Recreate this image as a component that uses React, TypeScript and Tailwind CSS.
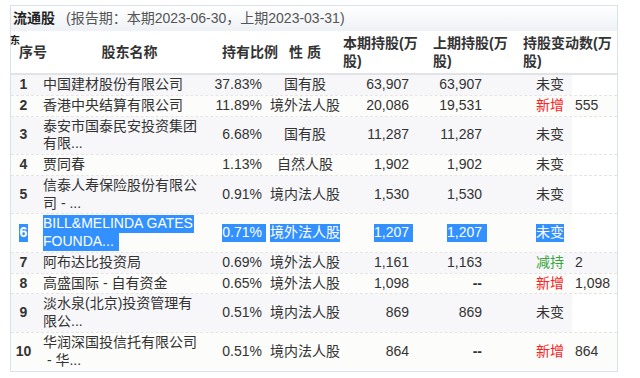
import React from "react";

type Row = {
  n: number;
  name: string[];
  pct: string;
  type: string;
  cur: string;
  prev: string;
  status: string;
  chg?: string;
  sel?: boolean;
};

const rows: Row[] = [
  { n: 1, name: ["中国建材股份有限公司"], pct: "37.83%", type: "国有股", cur: "63,907", prev: "63,907", status: "未变" },
  { n: 2, name: ["香港中央结算有限公司"], pct: "11.89%", type: "境外法人股", cur: "20,086", prev: "19,531", status: "新增", chg: "555" },
  { n: 3, name: ["泰安市国泰民安投资集团", "有限..."], pct: "6.68%", type: "国有股", cur: "11,287", prev: "11,287", status: "未变" },
  { n: 4, name: ["贾同春"], pct: "1.13%", type: "自然人股", cur: "1,902", prev: "1,902", status: "未变" },
  { n: 5, name: ["信泰人寿保险股份有限公", "司 - ..."], pct: "0.91%", type: "境内法人股", cur: "1,530", prev: "1,530", status: "未变" },
  { n: 6, name: ["BILL&MELINDA GATES", "FOUNDA..."], pct: "0.71%", type: "境外法人股", cur: "1,207", prev: "1,207", status: "未变", sel: true },
  { n: 7, name: ["阿布达比投资局"], pct: "0.69%", type: "境外法人股", cur: "1,161", prev: "1,163", status: "减持", chg: "2" },
  { n: 8, name: ["高盛国际 - 自有资金"], pct: "0.65%", type: "境外法人股", cur: "1,098", prev: "--", status: "新增", chg: "1,098" },
  { n: 9, name: ["淡水泉(北京)投资管理有", "限公..."], pct: "0.51%", type: "境内法人股", cur: "869", prev: "869", status: "未变" },
  { n: 10, name: ["华润深国投信托有限公司", "\u00a0- 华..."], pct: "0.51%", type: "境内法人股", cur: "864", prev: "--", status: "新增", chg: "864" },
];

function Hl({ on, children, extra = "" }: { on?: boolean; children: React.ReactNode; extra?: string }) {
  if (!on) return <span className={extra}>{children}</span>;
  return <span className={"inline-block bg-[#3390ff] text-white " + extra}>{children}</span>;
}

export default function App() {
  const font = { fontFamily: '"Liberation Sans", Arial, "Noto Sans CJK SC", sans-serif' };
  return (
    <div className="w-[640px] h-[378px] bg-white pt-[5px] pl-[10px] text-[14px] text-[#333]" style={font}>
      <div className="w-[608px] border border-[#d9e1ea] bg-white pb-[1px]">
        {/* Title bar */}
        <div className="h-[25px] flex items-center pl-[2px] bg-linear-to-b from-white to-[#eef1f5]">
          <span className="font-bold text-[#222]">流通股</span>
          <span className="ml-[11px] text-[#555]">(报告期：本期2023-06-30，上期2023-03-31)</span>
        </div>
        {/* Header */}
        <div className="relative h-[44px] flex border-b-2 border-[#e1e3e7] font-bold text-[#333] leading-[18px] bg-white">
          <span className="absolute -left-px top-[5px] text-[10px] leading-none font-bold text-[#222]">东</span>
          <div className="w-[25px] flex items-center pl-[8px] whitespace-nowrap">序号</div>
          <div className="w-[180px] flex items-center justify-center pl-[7px]">股东名称</div>
          <div className="w-[51px] flex items-center pl-[6px] whitespace-nowrap">持有比例</div>
          <div className="w-[76px] flex items-center justify-center whitespace-pre">性 质</div>
          <div className="w-[90px] flex items-center pl-0">
            本期持股(万
            <br />
            股)
          </div>
          <div className="w-[90px] flex items-center">
            上期持股(万
            <br />
            股)
          </div>
          <div className="w-[94px] flex items-center">
            持股变动数(万
            <br />
            股)
          </div>
        </div>
        {/* Rows */}
        <div className="leading-[17.75px]">
          {rows.map((r, i) => {
            const odd = r.n % 2 === 1;
            const rowBg = odd ? "bg-[#f7f7fa]" : "bg-[#fcfcfa]";
            const last = i === rows.length - 1;
            return (
              <div
                key={r.n}
                className={"flex " + (last ? "" : "border-b border-dashed border-[#e4e4e4]")}
              >
                <div className={"flex " + rowBg}>
                  <div className="w-[25px] py-px flex items-center justify-center font-bold">
                    <Hl on={r.sel} extra={r.sel ? "px-[1px]" : ""}>{r.n}</Hl>
                  </div>
                  <div className="w-[180px] py-px pl-[7px] flex flex-col justify-center whitespace-pre">
                    {r.name.map((l, k) => (
                      <div key={k}>
                        <Hl on={r.sel} extra={r.sel ? (k === r.name.length - 1 ? "pr-[5px]" : "pr-[1px]") : ""}>{l}</Hl>
                      </div>
                    ))}
                  </div>
                  <div className="w-[51px] py-px pr-[5px] flex items-center justify-end">
                    <Hl on={r.sel} extra={r.sel ? "pr-[4px] -mr-[4px]" : ""}>{r.pct}</Hl>
                  </div>
                  <div className="w-[76px] py-px flex items-center justify-center whitespace-nowrap">
                    <Hl on={r.sel}>{r.type}</Hl>
                  </div>
                  <div className="w-[90px] py-px pr-[24px] flex items-center justify-end">
                    <Hl on={r.sel} extra={r.sel ? "pr-[4px] -mr-[4px]" : ""}>{r.cur}</Hl>
                  </div>
                  <div className={"w-[90px] py-px pr-[41px] flex items-center justify-end " + (r.prev === "--" ? "font-bold" : "")}>
                    <Hl on={r.sel} extra={r.sel ? "pr-[5px] -mr-[5px]" : ""}>{r.prev}</Hl>
                  </div>
                  <div className="w-[49px] py-px pl-[13px] flex items-center">
                    <Hl
                      on={r.sel}
                      extra={
                        r.status === "新增"
                          ? "text-[#ff2222]"
                          : r.status === "减持"
                          ? "text-[#3aa63a]"
                          : ""
                      }
                    >
                      {r.status}
                    </Hl>
                  </div>
                </div>
                <div className={"w-[45px] py-px pl-[3px] flex items-center " + (r.chg ? rowBg : "bg-white")}>
                  {r.chg ?? ""}
                </div>
              </div>
            );
          })}
        </div>
      </div>
    </div>
  );
}
